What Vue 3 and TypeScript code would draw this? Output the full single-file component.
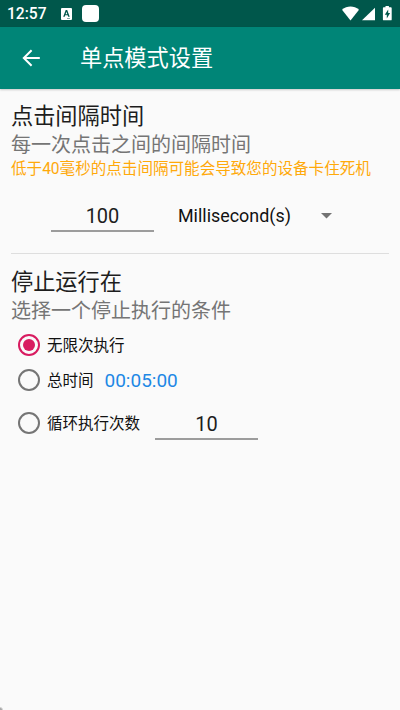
<script setup lang="ts">
import { ref } from 'vue'

type StopMode = 'infinite' | 'duration' | 'cycles'

const interval = ref<string>('100')
const cycles = ref<string>('10')
const stopMode = ref<StopMode>('infinite')
</script>

<template>
  <div class="screen">
    <header class="status">
      <span class="clock">12:57</span>
      <svg class="keyboard" width="11" height="12" viewBox="0 0 11 12">
        <path fill="#fff" fill-rule="evenodd" d="M1 0h9a1 1 0 0 1 1 1v10a1 1 0 0 1-1 1H1a1 1 0 0 1-1-1V1a1 1 0 0 1 1-1ZM4.7 2 2.2 8.7h1.5l.5-1.4h2.5l.5 1.4h1.5L6.2 2ZM5.45 3.8l.85 2.4H4.6ZM6 10h3v.5H6Z" />
      </svg>
      <span class="app-badge"></span>
      <svg class="system" width="52" height="16" viewBox="0 0 52 16" fill="#fff">
        <path d="M0 3.8C5-.5 12-.5 17 3.8L8.5 14.5Z" />
        <path d="M33 1.7v12.6H20Z" />
        <path fill-rule="evenodd" d="M43.5 1.3V0h3.4v1.3h1.9q.9 0 .9.9v11.2q0 .9-.9.9h-7q-.9 0-.9-.9V2.2q0-.9.9-.9ZM46.2 3.4l-3.4 5.3h2v3.8l3.3-5.4h-1.9Z" />
      </svg>
    </header>
    <nav class="toolbar">
      <svg class="back" width="18" height="18" viewBox="0 0 18 18" fill="none" stroke="#fff" stroke-width="2">
        <path d="M17.8 9H2M9.6 1.2 1.8 9l7.8 7.8" />
      </svg>
      <h1>单点模式设置</h1>
    </nav>
    <main>
      <section class="interval">
        <h2>点击间隔时间</h2>
        <p class="hint">每一次点击之间的间隔时间</p>
        <p class="warning">低于40毫秒的点击间隔可能会导致您的设备卡住死机</p>
        <div class="interval-row">
          <input v-model="interval" class="field" inputmode="numeric" />
          <span class="unit">Millisecond(s)</span>
          <svg class="caret" width="11" height="6" viewBox="0 0 11 6"><path fill="#737373" d="M0 0h11L5.5 5.6Z" /></svg>
        </div>
      </section>
      <section class="stop">
        <h2>停止运行在</h2>
        <p class="hint">选择一个停止执行的条件</p>
        <div class="option first" @click="stopMode = 'infinite'">
          <span class="radio" :class="{ on: stopMode === 'infinite' }"></span>
          <span class="label">无限次执行</span>
        </div>
        <div class="option second" @click="stopMode = 'duration'">
          <span class="radio" :class="{ on: stopMode === 'duration' }"></span>
          <span class="label">总时间</span>
          <span class="time">00:05:00</span>
        </div>
        <div class="option third" @click="stopMode = 'cycles'">
          <span class="radio" :class="{ on: stopMode === 'cycles' }"></span>
          <span class="label">循环执行次数</span>
          <input v-model="cycles" class="field" inputmode="numeric" />
        </div>
      </section>
    </main>
  </div>
</template>

<style>
body {
  margin: 0;
  background: #fafafa;
}
</style>

<style scoped>
.screen {
  box-sizing: border-box;
  width: 400px;
  height: 710px;
  overflow: hidden;
  background: radial-gradient(circle at 0 100%, #a8a8a8 0, #a8a8a8 1.5px, #fafafa 3.5px);
  color: #1d1d1d;
  font-family: Roboto, "Noto Sans CJK SC", sans-serif;
}
h1, h2, p {
  margin: 0;
  font-weight: 400;
  white-space: nowrap;
}
.status {
  display: flex;
  align-items: center;
  box-sizing: border-box;
  height: 27px;
  padding: 0 7px;
  background: #00574b;
}
.clock {
  width: 54px;
  padding-top: 1px;
  color: #fff;
  font-size: 15.6px;
  font-weight: 500;
  line-height: 26px;
}
.app-badge {
  width: 17px;
  height: 17px;
  margin-left: 10px;
  border-radius: 4px;
  background: #fff;
}
.system {
  margin-left: auto;
  margin-right: -1px;
}
.toolbar {
  display: flex;
  align-items: center;
  height: 62px;
  padding-left: 22px;
  background: #008577;
  box-shadow: 0 1px 2px rgba(0, 0, 0, 0.2);
}
h1 {
  margin-left: 40px;
  color: #fff;
  font-size: 22.2px;
  line-height: 32px;
}
main {
  padding: 12px 11px 0;
}
.interval {
  box-sizing: border-box;
  height: 153px;
  border-bottom: 1px solid #dedede;
}
h2 {
  font-size: 22.2px;
  line-height: 30px;
}
.hint {
  padding-top: 1px;
  color: #757575;
  font-size: 20px;
  line-height: 27px;
}
.warning {
  color: #ffa90a;
  font-size: 15.57px;
  line-height: 20px;
}
.interval-row {
  display: flex;
  align-items: center;
  height: 52px;
  padding: 10px 0 0 40px;
}
.field {
  box-sizing: border-box;
  width: 103px;
  height: 32px;
  padding: 2px 0 0;
  border: 0;
  border-bottom: 2px solid #9c9c9c;
  outline: 0;
  background: transparent;
  color: #1d1d1d;
  font: 20px Roboto, sans-serif;
  text-align: center;
}
.unit {
  width: 143px;
  margin-left: 24px;
  color: #111;
  font-size: 17.9px;
}
.caret {
  margin-top: 2px;
}
.stop {
  padding-top: 13px;
}
.option {
  display: flex;
  align-items: center;
  padding-left: 7px;
}
.first {
  height: 36px;
  margin-top: 2px;
}
.second {
  height: 34px;
}
.third {
  height: 52px;
}
.radio {
  display: flex;
  align-items: center;
  justify-content: center;
  box-sizing: border-box;
  width: 22px;
  height: 22px;
  border: 2px solid #757575;
  border-radius: 50%;
}
.second .radio,
.third .radio {
  margin-bottom: 1px;
}
.radio.on {
  border-color: #d81b60;
}
.radio.on::after {
  width: 12px;
  height: 12px;
  border-radius: 50%;
  background: #d81b60;
  content: "";
}
.label {
  margin-left: 7px;
  padding-top: 1px;
  color: #111;
  font-size: 15.5px;
  line-height: 22px;
}
.time {
  margin-left: 11px;
  padding-top: 1px;
  color: #1e88e5;
  font-size: 19px;
}
.interval-row .field {
  margin-top: 2px;
}
.third .field {
  margin-left: 15px;
  margin-top: 1px;
}
</style>
